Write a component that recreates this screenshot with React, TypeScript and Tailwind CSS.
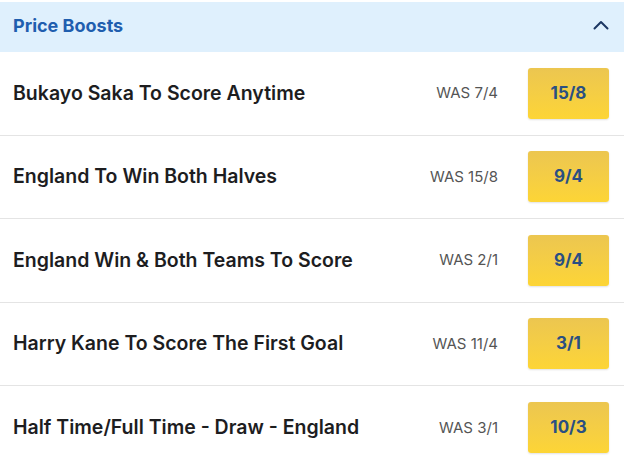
import React from 'react';

interface Boost {
  name: string;
  was: string;
  odds: string;
}

const BOOSTS: Boost[] = [
  { name: 'Bukayo Saka To Score Anytime', was: '7/4', odds: '15/8' },
  { name: 'England To Win Both Halves', was: '15/8', odds: '9/4' },
  { name: 'England Win & Both Teams To Score', was: '2/1', odds: '9/4' },
  { name: 'Harry Kane To Score The First Goal', was: '11/4', odds: '3/1' },
  { name: 'Half Time/Full Time - Draw - England', was: '3/1', odds: '10/3' },
];

const App: React.FC = () => {
  return (
    <div className="w-[624px] h-[468px] overflow-hidden bg-white pt-[2px] font-[Inter,sans-serif]">
      <div className="h-[50px] bg-[#dff0fd] flex items-center justify-between pl-[13px] pr-[14px] pb-[3px]">
        <h2 className="text-[18px] font-bold text-[#1f5eaf]">Price Boosts</h2>
        <svg className="w-[18px] h-[18px] text-[#1c3763]" viewBox="0 0 18 18" fill="none" stroke="currentColor">
          <path d="M2.5 11.5L9 5l6.5 6.5" strokeWidth={2} strokeLinecap="round" strokeLinejoin="round" />
        </svg>
      </div>

      <div>
        {BOOSTS.map((b, i) => (
          <div
            key={b.name}
            className={`flex items-center h-[83.5px] pl-[13px] pr-[15px] ${i < BOOSTS.length - 1 ? 'border-b border-[#e4e4e4]' : ''}`}
          >
            <span className="flex-1 text-[19.5px] font-semibold text-[#1d1d1f]">{b.name}</span>
            <span className="text-[15px] text-[#555555] mr-[30px]">WAS {b.was}</span>
            <button className="w-[81px] h-[51px] rounded-[3px] bg-gradient-to-b from-[#ecc650] to-[#fdd535] shadow-[0_1px_2px_rgba(0,0,0,0.12)] text-[17px] font-bold text-[#2a4f82]">
              {b.odds}
            </button>
          </div>
        ))}
      </div>
    </div>
  );
};

export default App;
